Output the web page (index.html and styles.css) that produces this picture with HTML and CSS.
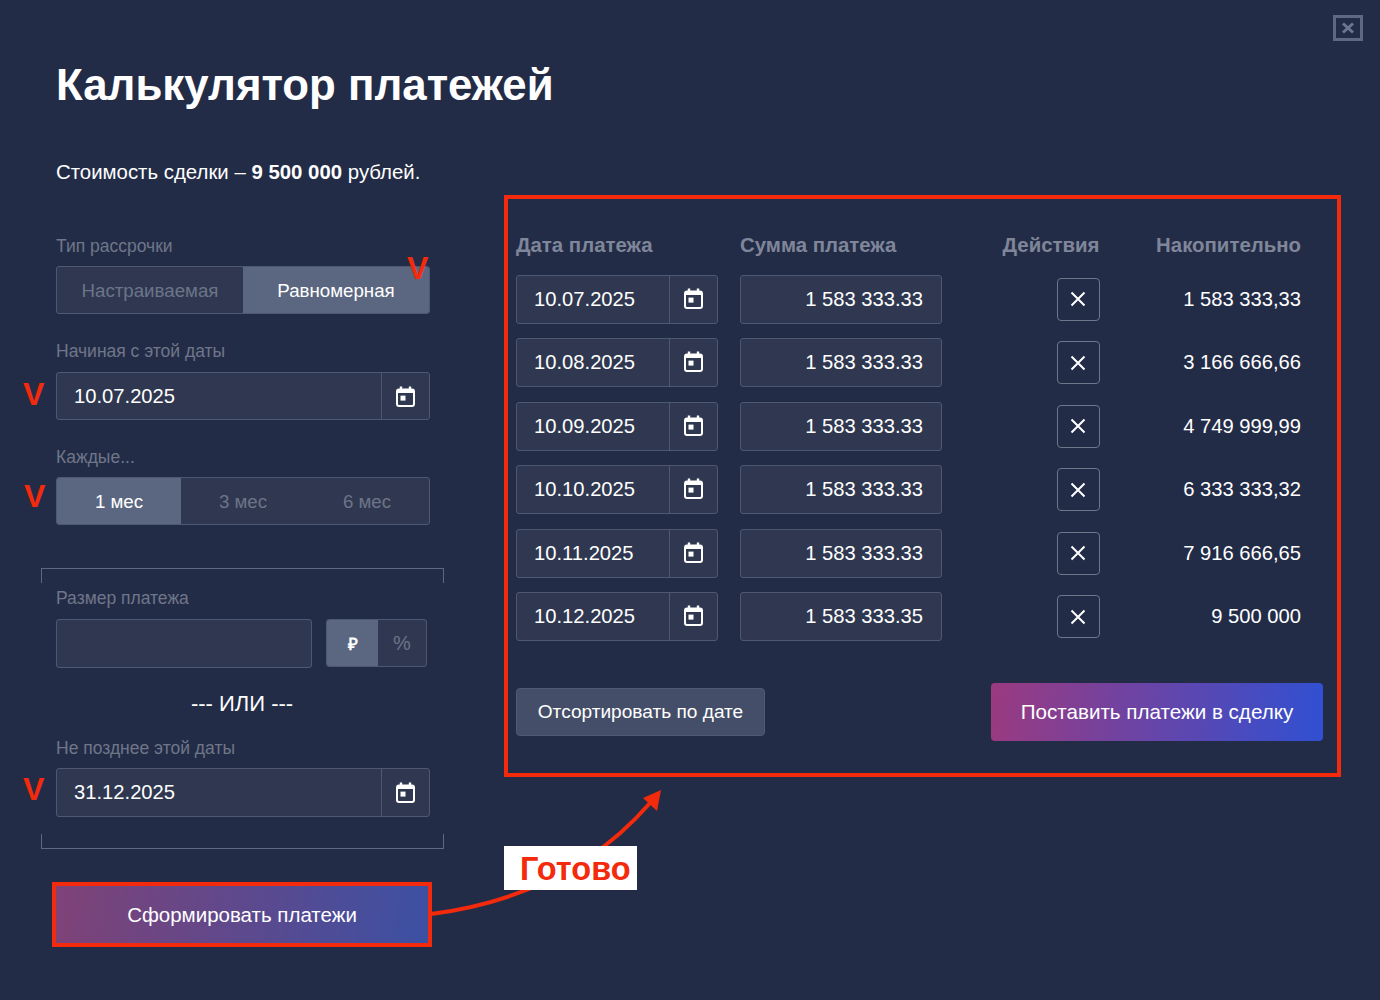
FILE: index.html
```html
<!DOCTYPE html>
<html lang="ru">
<head>
<meta charset="utf-8">
<title>Калькулятор платежей</title>
<link rel="stylesheet" href="styles.css">
</head>
<body>
<svg width="0" height="0" class="defs">
  <symbol id="cal" viewBox="0 0 19 21">
    <path d="M5 0.5V4M14 0.5V4" fill="none" stroke="currentColor" stroke-width="2.4"/>
    <rect x="1" y="3.6" width="17" height="16.4" rx="2" fill="none" stroke="currentColor" stroke-width="2"/>
    <rect x="1" y="3.6" width="17" height="3.4" fill="currentColor"/>
    <rect x="4.5" y="9.6" width="5" height="5" fill="currentColor"/>
  </symbol>
  <symbol id="x" viewBox="0 0 16 16">
    <path d="M1.5 1.5L14.5 14.5M14.5 1.5L1.5 14.5" fill="none" stroke="currentColor" stroke-width="2"/>
  </symbol>
</svg>
<main class="page">
  <button class="close" aria-label="Закрыть">
    <svg class="close-x" viewBox="0 0 14 12"><path d="M2 1.5L12 10.5M12 1.5L2 10.5" fill="none" stroke="currentColor" stroke-width="3"/></svg>
  </button>
  <h1 class="title">Калькулятор платежей</h1>
  <p class="deal">Стоимость сделки – <b>9 500 000</b> рублей.</p>

  <div class="columns">
    <section class="left">
      <div class="label">Тип рассрочки</div>
      <div class="seg">
        <div class="seg-item seg-a">Настраиваемая</div>
        <div class="seg-item seg-b on">Равномерная</div>
      </div>

      <div class="label label-next">Начиная с этой даты</div>
      <div class="date date-start">
        <div class="date-val">10.07.2025</div>
        <div class="date-btn"><svg class="cal"><use href="#cal"/></svg></div>
      </div>

      <div class="label label-next">Каждые...</div>
      <div class="seg">
        <div class="seg-item seg-1 on">1 мес</div>
        <div class="seg-item seg-1">3 мес</div>
        <div class="seg-item seg-1">6 мес</div>
      </div>

      <div class="bracket">
        <div class="label">Размер платежа</div>
        <div class="size-row">
          <div class="size-input"></div>
          <div class="seg seg-unit">
            <div class="seg-item seg-rub on">₽</div>
            <div class="seg-item seg-pct">%</div>
          </div>
        </div>
        <div class="or">--- ИЛИ ---</div>
        <div class="label">Не позднее этой даты</div>
        <div class="date">
          <div class="date-val">31.12.2025</div>
          <div class="date-btn"><svg class="cal"><use href="#cal"/></svg></div>
        </div>
      </div>

      <div class="form-frame">
        <button class="form-btn">Сформировать платежи</button>
      </div>
    </section>

    <section class="panel">
      <div class="head">
        <div class="c-date">Дата платежа</div>
        <div class="c-sum">Сумма платежа</div>
        <div class="c-act">Действия</div>
        <div class="c-tot">Накопительно</div>
      </div>
      <div class="rows">
        <div class="row">
          <div class="c-date"><div class="date"><div class="date-val">10.07.2025</div><div class="date-btn"><svg class="cal"><use href="#cal"/></svg></div></div></div>
          <div class="c-sum"><div class="sum">1 583 333.33</div></div>
          <div class="c-act"><button class="del"><svg class="x"><use href="#x"/></svg></button></div>
          <div class="c-tot">1 583 333,33</div>
        </div>
        <div class="row">
          <div class="c-date"><div class="date"><div class="date-val">10.08.2025</div><div class="date-btn"><svg class="cal"><use href="#cal"/></svg></div></div></div>
          <div class="c-sum"><div class="sum">1 583 333.33</div></div>
          <div class="c-act"><button class="del"><svg class="x"><use href="#x"/></svg></button></div>
          <div class="c-tot">3 166 666,66</div>
        </div>
        <div class="row">
          <div class="c-date"><div class="date"><div class="date-val">10.09.2025</div><div class="date-btn"><svg class="cal"><use href="#cal"/></svg></div></div></div>
          <div class="c-sum"><div class="sum">1 583 333.33</div></div>
          <div class="c-act"><button class="del"><svg class="x"><use href="#x"/></svg></button></div>
          <div class="c-tot">4 749 999,99</div>
        </div>
        <div class="row">
          <div class="c-date"><div class="date"><div class="date-val">10.10.2025</div><div class="date-btn"><svg class="cal"><use href="#cal"/></svg></div></div></div>
          <div class="c-sum"><div class="sum">1 583 333.33</div></div>
          <div class="c-act"><button class="del"><svg class="x"><use href="#x"/></svg></button></div>
          <div class="c-tot">6 333 333,32</div>
        </div>
        <div class="row">
          <div class="c-date"><div class="date"><div class="date-val">10.11.2025</div><div class="date-btn"><svg class="cal"><use href="#cal"/></svg></div></div></div>
          <div class="c-sum"><div class="sum">1 583 333.33</div></div>
          <div class="c-act"><button class="del"><svg class="x"><use href="#x"/></svg></button></div>
          <div class="c-tot">7 916 666,65</div>
        </div>
        <div class="row">
          <div class="c-date"><div class="date"><div class="date-val">10.12.2025</div><div class="date-btn"><svg class="cal"><use href="#cal"/></svg></div></div></div>
          <div class="c-sum"><div class="sum">1 583 333.35</div></div>
          <div class="c-act"><button class="del"><svg class="x"><use href="#x"/></svg></button></div>
          <div class="c-tot">9 500 000</div>
        </div>
      </div>
      <div class="actions">
        <button class="sort">Отсортировать по дате</button>
        <button class="apply">Поставить платежи в сделку</button>
      </div>
    </section>
  </div>

  <div class="mark m1">V</div>
  <div class="mark m2">V</div>
  <div class="mark m3">V</div>
  <div class="mark m4">V</div>
  <svg class="arrow" viewBox="0 0 1380 1000">
    <path d="M431 914C500 905 585 878 650 803" fill="none" stroke="#f32a0c" stroke-width="4"/>
    <polygon points="661,790 643,798 657,811" fill="#f32a0c"/>
  </svg>
  <div class="done">Готово</div>
</main>
</body>
</html>
```
FILE: styles.css
```css
* { box-sizing: border-box; }
html, body { margin: 0; padding: 0; }
body {
  background: #232c47;
  color: #fff;
  font-family: "Liberation Sans", Arial, sans-serif;
}
.defs { position: absolute; }
button { font-family: inherit; cursor: pointer; }

.page {
  position: relative;
  width: 1380px;
  height: 1000px;
  padding: 60px 0 0 56px;
  overflow: hidden;
}
.close {
  position: absolute;
  left: 1333px;
  top: 15px;
  width: 30px;
  height: 26px;
  padding: 0;
  display: flex;
  align-items: center;
  justify-content: center;
  background: none;
  border: 3px solid #5d6884;
  color: #6b7690;
}
.close-x { width: 14px; height: 12px; }

.title {
  margin: 0;
  font-size: 43.8px;
  line-height: 50px;
  font-weight: 700;
}
.deal {
  margin: 50px 0 0;
  font-size: 20.4px;
  line-height: 24px;
}

.columns {
  display: flex;
  align-items: flex-start;
  margin-top: 11px;
}
.left {
  width: 374px;
  padding-top: 40px;
}
.label {
  font-size: 17.5px;
  line-height: 22px;
  height: 22px;
  margin-bottom: 9px;
  color: #6f7689;
}
.label-next { margin-top: 26px; }

.seg {
  display: flex;
  height: 48px;
  background: #2f3850;
  border: 1px solid #4d5872;
  border-radius: 3px;
  overflow: hidden;
  font-size: 18.7px;
  color: #6c7488;
}
.seg-item {
  display: flex;
  align-items: center;
  justify-content: center;
  padding-top: 1px;
}
.seg-item.on { background: #5b6781; color: #fff; }
.seg-a, .seg-b { flex: 1; }
.seg-1 { flex: 1; }

.date {
  display: flex;
  height: 49px;
  background: #2f3850;
  border: 1px solid #4d5872;
  border-radius: 3px;
}
.date-start {
  height: 48px;
  margin-top: 10px;
}
.date-val {
  flex: 1;
  padding-left: 17px;
  font-size: 20.2px;
  line-height: 47px;
}
.date-btn {
  width: 48px;
  border-left: 1px solid #4d5872;
  display: flex;
  align-items: center;
  justify-content: center;
}
.cal { width: 19px; height: 21px; color: #fff; }
.row .cal { margin-bottom: 2px; }

.bracket {
  position: relative;
  width: 403px;
  height: 281px;
  margin: 43px 0 0 -15px;
  padding: 19px 14px 0 15px;
}
.bracket::before, .bracket::after {
  content: "";
  position: absolute;
  left: 0;
  right: 0;
  height: 14px;
  border: 1px solid #5d6884;
}
.bracket::before { top: 0; border-bottom: 0; }
.bracket::after { bottom: 0; border-top: 0; }

.size-row {
  display: flex;
  gap: 14px;
  margin-top: 10px;
}
.size-input {
  width: 256px;
  height: 49px;
  background: #2f3850;
  border: 1px solid #4d5872;
  border-radius: 3px;
}
.seg-unit { width: 101px; }
.seg-rub { width: 51px; font-weight: 700; font-size: 17px; }
.seg-pct { flex: 1; font-size: 20px; }

.or {
  margin: 24px 0 21px;
  padding-right: 2px;
  text-align: center;
  font-size: 22px;
  line-height: 24px;
}
.form-frame {
  width: 380px;
  height: 65px;
  margin: 33px 0 0 -4px;
  border: 4px solid #f32a0c;
}
.form-btn {
  display: block;
  width: 100%;
  height: 100%;
  padding: 0;
  border: 0;
  color: #fff;
  font-size: 20.5px;
  background: linear-gradient(95deg, #7f4277, #3c50a3);
}

.panel {
  width: 837px;
  height: 582px;
  margin-left: 74px;
  padding: 34px 14px 0 8px;
  border: 4px solid #f32a0c;
}
.head, .row { display: flex; align-items: center; }
.head {
  height: 24px;
  margin-bottom: 17.5px;
  font-size: 20.4px;
  font-weight: 700;
  color: #7f8699;
}
.c-date { width: 224px; }
.c-sum { width: 202px; }
.c-act { width: 157.5px; display: flex; justify-content: flex-end; }
.c-tot { width: 201.5px; text-align: right; }
.rows { display: flex; flex-direction: column; gap: 14.5px; }
.row { font-size: 20.2px; }
.row .date { width: 202px; }
.sum {
  height: 49px;
  padding-right: 18px;
  background: #2f3850;
  border: 1px solid #4d5872;
  border-radius: 3px;
  text-align: right;
  font-size: 20.2px;
  line-height: 47px;
}
.del {
  width: 43px;
  height: 43px;
  padding: 0;
  display: flex;
  align-items: center;
  justify-content: center;
  background: none;
  border: 1px solid #6f7689;
  border-radius: 4px;
  color: #fff;
}
.x { width: 16px; height: 16px; }

.actions {
  display: flex;
  justify-content: space-between;
  align-items: center;
  margin-top: 41.5px;
}
.sort {
  width: 249px;
  height: 48px;
  padding: 1px 0 0;
  background: #454e68;
  border: 1px solid #505a75;
  border-radius: 4px;
  color: #fff;
  font-size: 19.1px;
}
.apply {
  width: 332px;
  height: 58px;
  padding: 0;
  border: 0;
  border-radius: 4px;
  color: #fff;
  font-size: 20.6px;
  background: linear-gradient(95deg, #9b3a80, #3050d2);
}

.mark {
  position: absolute;
  font-size: 32px;
  line-height: 32px;
  font-weight: 700;
  color: #f32a0c;
}
.m1 { left: 407px; top: 252px; }
.m2 { left: 23px; top: 378px; }
.m3 { left: 24px; top: 480px; }
.m4 { left: 23px; top: 773px; }
.arrow {
  position: absolute;
  left: 0;
  top: 0;
  width: 1380px;
  height: 1000px;
  pointer-events: none;
}
.done {
  position: absolute;
  left: 504px;
  top: 846px;
  width: 133px;
  height: 44px;
  padding-left: 16px;
  background: #fff;
  color: #f32a0c;
  font-size: 32.5px;
  line-height: 46px;
  font-weight: 700;
}
```
